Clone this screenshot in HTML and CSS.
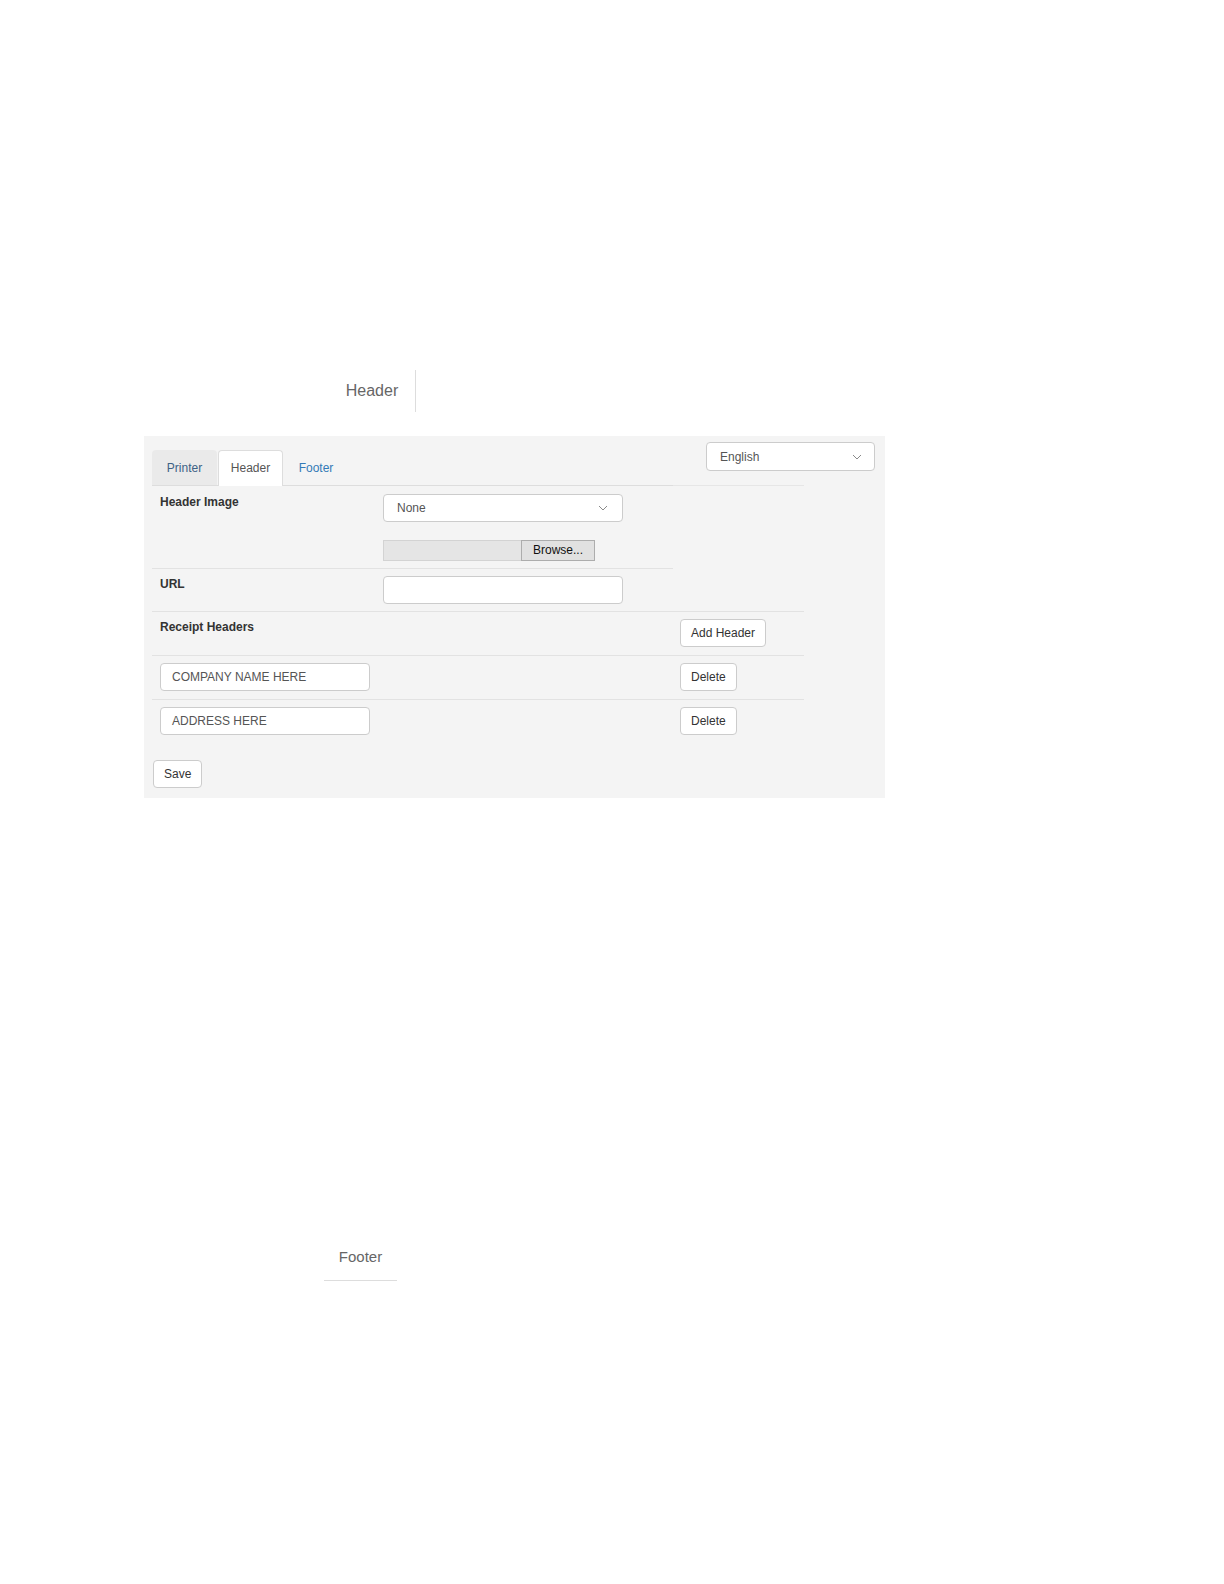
FILE: index.html
```html
<!DOCTYPE html>
<html lang="en">
<head>
    <meta charset="UTF-8">
    <meta name="viewport" content="width=device-width, initial-scale=1.0">
    <title>Receipt Settings - Header</title>
    <link rel="stylesheet" href="styles.css">
</head>
<body>
    <div class="doc-title">Header</div>

    <div class="panel">
        <div class="lang-select">
            <span>English</span>
            <svg class="chevron" width="10" height="6" viewBox="0 0 10 6"><path d="M1 1l4 4 4-4" fill="none" stroke="#8a8a8a" stroke-width="1"/></svg>
        </div>

        <div class="tabs-wrap">
            <ul class="tabs">
                <li class="tab tab-hover">Printer</li>
                <li class="tab active">Header</li>
                <li class="tab tab-last">Footer</li>
            </ul>
        </div>

        <div class="inner">
            <div class="row row-first">
                <div class="label-cell">Header Image</div>
                <div class="field-cell">
                    <div class="select">
                        <span>None</span>
                        <svg class="chevron" width="10" height="6" viewBox="0 0 10 6"><path d="M1 1l4 4 4-4" fill="none" stroke="#8a8a8a" stroke-width="1"/></svg>
                    </div>
                    <div class="file-input">
                        <div class="file-name"></div>
                        <div class="file-btn">Browse...</div>
                    </div>
                </div>
            </div>
            <div class="row row-url">
                <div class="label-cell">URL</div>
                <div class="field-cell">
                    <div class="text-input wide-input"></div>
                </div>
            </div>
        </div>

        <div class="row full">
            <div class="main-cell label-cell">Receipt Headers</div>
            <div class="btn-cell"><button class="btn">Add Header</button></div>
        </div>
        <div class="row full">
            <div class="main-cell"><div class="text-input line-input">COMPANY NAME HERE</div></div>
            <div class="btn-cell"><button class="btn">Delete</button></div>
        </div>
        <div class="row full row-last">
            <div class="main-cell"><div class="text-input line-input">ADDRESS HERE</div></div>
            <div class="btn-cell"><button class="btn">Delete</button></div>
        </div>

        <button class="btn save-btn">Save</button>
    </div>

    <div class="doc-footer">Footer</div>
</body>
</html>
```

FILE: styles.css
```css
body {
    font-family: "Liberation Sans", Arial, sans-serif;
    margin: 0;
    padding-top: 370px;
    background: #fff;
    color: #333;
}
.doc-title {
    margin-left: 329px;
    width: 86px;
    height: 42px;
    line-height: 42px;
    border-right: 1px solid #ddd;
    text-align: center;
    font-size: 16px;
    color: #666;
}
.panel {
    position: relative;
    margin: 24px 0 0 144px;
    width: 741px;
    box-sizing: border-box;
    padding: 14px 0 10px 8px;
    background: #f4f4f4;
    font-size: 12px;
}
.lang-select {
    position: absolute;
    top: 6px;
    right: 10px;
    width: 169px;
    height: 29px;
    box-sizing: border-box;
    padding: 0 12px 0 13px;
    display: flex;
    align-items: center;
    justify-content: space-between;
    background: #fff;
    border: 1px solid #ccc;
    border-radius: 4px;
    color: #555;
}
.tabs-wrap {
    width: 652px;
    border-bottom: 1px solid #e6e6e6;
}
.tabs {
    display: flex;
    list-style: none;
    margin: 0 0 -1px 0;
    padding: 0;
    width: 521px;
    border-bottom: 1px solid #ddd;
}
.tab {
    width: 65px;
    height: 34px;
    line-height: 34px;
    text-align: center;
    border: 1px solid transparent;
    border-bottom: none;
    border-radius: 4px 4px 0 0;
    margin: 0 1px -1px 0;
    box-sizing: content-box;
    color: #337ab7;
}
.tab:first-child {
    width: 63px;
}
.tab-last {
    width: 62px;
}
.tab-hover {
    background: #eaeaea;
    color: #3d6285;
}
.tab.active {
    background: #fff;
    border-color: #ddd;
    height: 35px;
    width: 63px;
    color: #555;
}
.inner {
    width: 521px;
}
.row {
    display: flex;
    padding: 7px 0 8px;
    border-top: 1px solid #e2e2e2;
}
.row-first {
    border-top: none;
    padding: 8px 0 7px;
}
.row-url {
    padding-bottom: 7px;
}
.label-cell {
    width: 223px;
    box-sizing: border-box;
    padding-left: 8px;
    line-height: 16px;
    font-weight: bold;
    color: #333;
}
.field-cell {
    flex: 1;
    padding-left: 8px;
}
.select {
    width: 240px;
    height: 28px;
    box-sizing: border-box;
    padding: 0 14px 0 13px;
    display: flex;
    align-items: center;
    justify-content: space-between;
    background: #fff;
    border: 1px solid #ccc;
    border-radius: 4px;
    color: #555;
}
.chevron {
    display: block;
}
.file-input {
    display: flex;
    margin-top: 18px;
    height: 21px;
}
.file-name {
    width: 138px;
    box-sizing: border-box;
    background: #e5e5e5;
    border: 1px solid #d3d3d3;
    border-right: none;
}
.file-btn {
    width: 74px;
    box-sizing: border-box;
    line-height: 19px;
    text-align: center;
    background: #e1e1e1;
    border: 1px solid #adadad;
    color: #111;
}
.text-input {
    height: 28px;
    line-height: 26px;
    box-sizing: border-box;
    padding: 0 11px;
    background: #fff;
    border: 1px solid #ccc;
    border-radius: 4px;
    color: #555;
}
.wide-input {
    width: 240px;
}
.full {
    width: 652px;
}
.main-cell {
    width: 520px;
    box-sizing: border-box;
    padding-left: 8px;
}
.main-cell.label-cell {
    width: 520px;
}
.line-input {
    width: 210px;
}
.btn-cell {
    padding-left: 8px;
}
.btn {
    height: 28px;
    padding: 0 10px;
    font-family: "Liberation Sans", Arial, sans-serif;
    font-size: 12px;
    color: #333;
    background: #fff;
    border: 1px solid #ccc;
    border-radius: 4px;
}
.row-last {
    padding-bottom: 8px;
}
.save-btn {
    display: block;
    margin: 17px 0 0 1px;
}
.doc-footer {
    margin: 440px 0 0 324px;
    width: 73px;
    line-height: 38px;
    padding-bottom: 4px;
    border-bottom: 1px solid #ddd;
    text-align: center;
    font-size: 15px;
    color: #666;
}
```
